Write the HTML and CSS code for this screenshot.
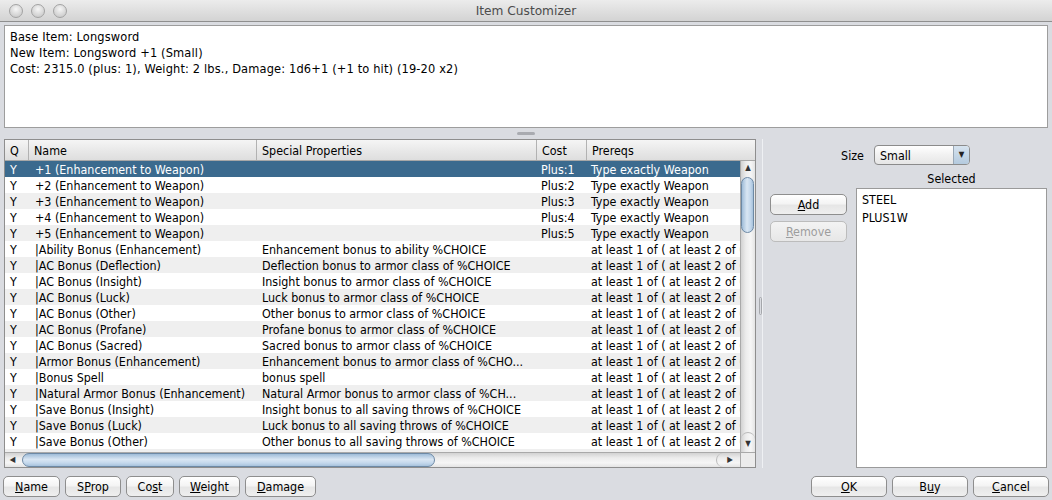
FILE: index.html
```html
<!DOCTYPE html>
<html>
<head>
<meta charset="utf-8">
<link rel="stylesheet" href="styles.css">
</head>
<body>
<div class="window">
  <div class="titlebar">
    <div class="lights"><span class="light"></span><span class="light"></span><span class="light"></span></div>
    <div class="title">Item Customizer</div>
    <div></div>
  </div>
  <div class="info">
    <div>Base Item: Longsword</div>
    <div>New Item: Longsword +1 (Small)</div>
    <div>Cost: 2315.0 (plus: 1), Weight: 2 lbs., Damage: 1d6+1 (+1 to hit) (19-20 x2)</div>
  </div>
  <div class="hsplit"><span class="hgrip"></span></div>
  <div class="main">
    <div class="pane">
      <div class="thead">
        <div class="h h-q">Q</div>
        <div class="h">Name</div>
        <div class="h">Special Properties</div>
        <div class="h">Cost</div>
        <div class="h">Prereqs</div>
      </div>
      <div class="pbody">
        <div class="rows">
          <div class="r sel"><span class="c-q">Y</span><span class="c-n">+1 (Enhancement to Weapon)</span><span class="c-s"></span><span class="c-c">Plus:1</span><span class="c-p">Type exactly Weapon</span></div>
          <div class="r"><span class="c-q">Y</span><span class="c-n">+2 (Enhancement to Weapon)</span><span class="c-s"></span><span class="c-c">Plus:2</span><span class="c-p">Type exactly Weapon</span></div>
          <div class="r alt"><span class="c-q">Y</span><span class="c-n">+3 (Enhancement to Weapon)</span><span class="c-s"></span><span class="c-c">Plus:3</span><span class="c-p">Type exactly Weapon</span></div>
          <div class="r"><span class="c-q">Y</span><span class="c-n">+4 (Enhancement to Weapon)</span><span class="c-s"></span><span class="c-c">Plus:4</span><span class="c-p">Type exactly Weapon</span></div>
          <div class="r alt"><span class="c-q">Y</span><span class="c-n">+5 (Enhancement to Weapon)</span><span class="c-s"></span><span class="c-c">Plus:5</span><span class="c-p">Type exactly Weapon</span></div>
          <div class="r"><span class="c-q">Y</span><span class="c-n">|Ability Bonus (Enhancement)</span><span class="c-s">Enhancement bonus to ability %CHOICE</span><span class="c-c"></span><span class="c-p">at least 1 of ( at least 2 of ( Type exactly Weapon</span></div>
          <div class="r alt"><span class="c-q">Y</span><span class="c-n">|AC Bonus (Deflection)</span><span class="c-s">Deflection bonus to armor class of %CHOICE</span><span class="c-c"></span><span class="c-p">at least 1 of ( at least 2 of ( Type exactly Weapon</span></div>
          <div class="r"><span class="c-q">Y</span><span class="c-n">|AC Bonus (Insight)</span><span class="c-s">Insight bonus to armor class of %CHOICE</span><span class="c-c"></span><span class="c-p">at least 1 of ( at least 2 of ( Type exactly Weapon</span></div>
          <div class="r alt"><span class="c-q">Y</span><span class="c-n">|AC Bonus (Luck)</span><span class="c-s">Luck bonus to armor class of %CHOICE</span><span class="c-c"></span><span class="c-p">at least 1 of ( at least 2 of ( Type exactly Weapon</span></div>
          <div class="r"><span class="c-q">Y</span><span class="c-n">|AC Bonus (Other)</span><span class="c-s">Other bonus to armor class of %CHOICE</span><span class="c-c"></span><span class="c-p">at least 1 of ( at least 2 of ( Type exactly Weapon</span></div>
          <div class="r alt"><span class="c-q">Y</span><span class="c-n">|AC Bonus (Profane)</span><span class="c-s">Profane bonus to armor class of %CHOICE</span><span class="c-c"></span><span class="c-p">at least 1 of ( at least 2 of ( Type exactly Weapon</span></div>
          <div class="r"><span class="c-q">Y</span><span class="c-n">|AC Bonus (Sacred)</span><span class="c-s">Sacred bonus to armor class of %CHOICE</span><span class="c-c"></span><span class="c-p">at least 1 of ( at least 2 of ( Type exactly Weapon</span></div>
          <div class="r alt"><span class="c-q">Y</span><span class="c-n">|Armor Bonus (Enhancement)</span><span class="c-s">Enhancement bonus to armor class of %CHO...</span><span class="c-c"></span><span class="c-p">at least 1 of ( at least 2 of ( Type exactly Weapon</span></div>
          <div class="r"><span class="c-q">Y</span><span class="c-n">|Bonus Spell</span><span class="c-s">bonus spell</span><span class="c-c"></span><span class="c-p">at least 1 of ( at least 2 of ( Type exactly Weapon</span></div>
          <div class="r alt"><span class="c-q">Y</span><span class="c-n">|Natural Armor Bonus (Enhancement)</span><span class="c-s">Natural Armor bonus to armor class of %CH...</span><span class="c-c"></span><span class="c-p">at least 1 of ( at least 2 of ( Type exactly Weapon</span></div>
          <div class="r"><span class="c-q">Y</span><span class="c-n">|Save Bonus (Insight)</span><span class="c-s">Insight bonus to all saving throws of %CHOICE</span><span class="c-c"></span><span class="c-p">at least 1 of ( at least 2 of ( Type exactly Weapon</span></div>
          <div class="r alt"><span class="c-q">Y</span><span class="c-n">|Save Bonus (Luck)</span><span class="c-s">Luck bonus to all saving throws of %CHOICE</span><span class="c-c"></span><span class="c-p">at least 1 of ( at least 2 of ( Type exactly Weapon</span></div>
          <div class="r"><span class="c-q">Y</span><span class="c-n">|Save Bonus (Other)</span><span class="c-s">Other bonus to all saving throws of %CHOICE</span><span class="c-c"></span><span class="c-p">at least 1 of ( at least 2 of ( Type exactly Weapon</span></div>
          <div class="r alt"><span class="c-q">Y</span><span class="c-n">|Save Bonus (Profane)</span><span class="c-s">Profane bonus to all saving throws of %CHOICE</span><span class="c-c"></span><span class="c-p">at least 1 of ( at least 2 of ( Type exactly Weapon</span></div>
        </div>
        <div class="vscroll">
          <div class="varrow-up">&#9650;</div>
          <div class="vtrack"><div class="vthumb"></div></div>
          <div class="varrow-down">&#9660;</div>
        </div>
      </div>
      <div class="hscrollrow">
        <div class="hscroll">
          <div class="harrow-left">&#9664;</div>
          <div class="hthumb"></div>
          <div class="hspace"></div>
          <div class="harrow-right">&#9654;</div>
        </div>
        <div class="corner"></div>
      </div>
    </div>
    <div class="vsplit"><span class="vgrip"></span></div>
    <div class="side">
      <div class="sizerow">
        <span class="lbl">Size</span>
        <div class="combo"><span class="combo-text">Small</span><span class="combo-btn">&#9660;</span></div>
      </div>
      <div class="selrow">
        <div class="selbtns">
          <div class="btn"><u>A</u>dd</div>
          <div class="btn disabled"><u>R</u>emove</div>
        </div>
        <div class="selcol">
          <div class="sellbl">Selected</div>
          <div class="list">
            <div class="li">STEEL</div>
            <div class="li">PLUS1W</div>
          </div>
        </div>
      </div>
    </div>
  </div>
  <div class="bottombar">
    <div class="bgroup">
      <div class="btn b-name"><u>N</u>ame</div>
      <div class="btn b-sprop">S<u>P</u>rop</div>
      <div class="btn b-cost">Co<u>s</u>t</div>
      <div class="btn b-weight"><u>W</u>eight</div>
      <div class="btn b-damage"><u>D</u>amage</div>
    </div>
    <div class="bgroup right">
      <div class="btn b-76"><u>O</u>K</div>
      <div class="btn b-76">B<u>u</u>y</div>
      <div class="btn b-76"><u>C</u>ancel</div>
    </div>
  </div>
</div>
</body>
</html>
```
FILE: styles.css
```css
* { box-sizing: border-box; }
html, body { margin: 0; padding: 0; }
body {
  width: 1052px;
  height: 500px;
  overflow: hidden;
  background: #dadce1;
  font-family: "DejaVu Sans Condensed", "DejaVu Sans", sans-serif;
  font-size: 12.4px;
  color: #000;
}
.window { width: 1052px; height: 500px; display: flex; flex-direction: column; }

/* title bar */
.titlebar {
  height: 22px;
  flex: none;
  display: grid;
  grid-template-columns: 1fr auto 1fr;
  align-items: center;
  background: linear-gradient(#ececec, #d3d3d3);
  border-bottom: 1px solid #8f8f8f;
}
.lights { display: flex; gap: 8px; padding-left: 9px; }
.light {
  width: 14px; height: 14px; border-radius: 50%;
  border: 1px solid #a3a3a3;
  background: radial-gradient(circle at 50% 35%, #f6f6f6, #d6d6d6 60%, #c4c4c4);
}
.title { color: #4c4c4c; font-family: "DejaVu Sans", sans-serif; font-size: 12.2px; }

/* info area */
.info {
  flex: none;
  margin: 3px 4px 0 4px;
  height: 103px;
  background: #fff;
  border: 1px solid #9d9d9d;
  padding: 3px 5px;
  line-height: 16px;
  font-size: 12.7px;
  letter-spacing: 0.15px;
}
.hsplit { flex: none; height: 11px; display: flex; justify-content: center; padding-top: 4px; }
.hgrip { width: 18px; height: 3px; border-radius: 2px; background: #a9abb0; }

/* main */
.main { flex: none; height: 329px; display: flex; padding-left: 4px; }
.pane {
  width: 752px; height: 329px;
  border: 1px solid #8e8e8e;
  background: #fff;
  display: flex; flex-direction: column;
}
.thead {
  height: 21px; flex: none;
  display: grid;
  grid-template-columns: 23px 228px 280px 50px 1fr;
  background: linear-gradient(#f5f5f5, #e9e9e9 50%, #dedede);
  border-bottom: 1px solid #a7a7a7;
  line-height: 21px;
}
.h { border-left: 1px solid #b2b2b2; padding-left: 5px; white-space: nowrap; overflow: hidden; }
.h-q { border-left: none; padding-left: 5px; }

.pbody { height: 291px; flex: none; display: flex; }
.rows { width: 735px; overflow: hidden; }
.r {
  height: 16px; line-height: 17px;
  display: grid;
  grid-template-columns: 23px 228px 280px 50px 154px;
  background: #fff;
  white-space: nowrap;
}
.r.alt { background: #efefef; }
.r.sel { background: #3b6a8e; color: #fff; }
.r span { overflow: hidden; }
.c-q { padding-left: 5px; }
.c-n { padding-left: 7px; }
.c-s { padding-left: 6px; }
.c-c { padding-left: 5px; }
.c-p { padding-left: 5px; }

/* vertical scrollbar */
.vscroll {
  width: 15px; flex: none;
  display: flex; flex-direction: column;
  border-left: 1px solid #a9a9a9;
  background: linear-gradient(to right, #d2d2d2, #ececec 35%, #f6f6f6 70%, #e4e4e4);
}
.varrow-up { height: 14px; font-size: 8px; line-height: 14px; text-align: center; color: #333; }
.vtrack { flex: 1; padding: 2px 1px 0 0; }
.vthumb {
  height: 56px;
  border: 1px solid #6d89a5;
  border-radius: 7px;
  background: linear-gradient(to right, #9fbcd8, #d9e6f3 45%, #c4d8ec 75%, #a7c2dc);
}
.varrow-down {
  height: 20px; font-size: 8px; line-height: 22px; text-align: center; color: #333;
  border-top: 1px solid #b9b9b9;
  border-radius: 7px 7px 0 0;
}

/* horizontal scrollbar */
.hscrollrow { height: 15px; flex: none; display: flex; }
.hscroll {
  width: 735px;
  display: flex; align-items: stretch;
  border-top: 1px solid #a9a9a9;
  background: linear-gradient(#d2d2d2, #ececec 35%, #f6f6f6 70%, #e4e4e4);
}
.harrow-left { width: 15px; font-size: 8px; line-height: 14px; text-align: center; color: #333; }
.hthumb {
  width: 413px; margin: 0 0 0 2px;
  border: 1px solid #6d89a5;
  border-radius: 7px;
  background: linear-gradient(#9fbcd8, #d9e6f3 45%, #c4d8ec 75%, #a7c2dc);
}
.hspace { flex: 1; }
.harrow-right {
  width: 24px; font-size: 8px; line-height: 14px; text-align: center; color: #333;
  padding-left: 3px;
  border-left: 1px solid #b9b9b9;
  border-radius: 7px 0 0 7px;
}
.corner { width: 15px; border-top: 1px solid #a9a9a9; border-left: 1px solid #a9a9a9; background: #ececec; }

/* vertical split */
.vsplit {
  width: 7px; flex: none;
  display: flex; align-items: center; justify-content: center;
  border-right: 1px solid #eef0f3;
  padding-left: 2px;
}
.vgrip { width: 3px; height: 18px; border: 1px solid #a5a7ab; border-radius: 2px; margin-top: 4px; }

/* side panel */
.side { flex: 1; display: flex; flex-direction: column; }
.sizerow { height: 20px; margin-top: 6px; display: flex; justify-content: center; align-items: center; gap: 10px; padding-right: 4px; }
.combo {
  width: 96px; height: 20px;
  border: 1px solid #8b8b8b; border-radius: 4px;
  background: linear-gradient(#ffffff, #f1f1f1 50%, #e6e6e6);
  display: flex; align-items: center; justify-content: space-between;
  overflow: hidden;
}
.combo-text { padding-left: 5px; }
.combo-btn {
  width: 16px; height: 18px; font-size: 8px; line-height: 18px; text-align: center; color: #222;
  border-left: 1px solid #9aa8b6;
  background: linear-gradient(#d6e3ef, #b4cade);
}
.selrow { flex: 1; display: flex; padding-left: 7px; gap: 9px; padding-right: 5px; }
.selbtns { width: 77px; padding-top: 29px; display: flex; flex-direction: column; gap: 6px; }
.selcol { flex: 1; display: flex; flex-direction: column; }
.sellbl { height: 23px; padding-top: 6px; line-height: 16px; text-align: center; }
.list { flex: 1; background: #fff; border: 1px solid #9a9a9a; padding: 2px 5px; }
.li { line-height: 18px; }

/* buttons */
.btn {
  height: 21px;
  border: 1px solid #8e8e8e;
  border-radius: 5px;
  background: linear-gradient(#ffffff, #f4f4f4 45%, #e6e6e6 55%, #efefef);
  text-align: center;
  line-height: 20px;
  white-space: nowrap;
}
.btn.disabled { color: #9d9d9d; border-color: #bcbcbc; background: linear-gradient(#f3f3f3, #e7e7e7); }
.bottombar { flex: 1; display: flex; justify-content: space-between; padding: 8px 3px 0 3px; }
.bgroup { display: flex; gap: 5px; }
.bgroup.right { gap: 5px; }
.b-name { width: 57px; }
.b-sprop { width: 56px; }
.b-cost { width: 48px; }
.b-weight { width: 61px; }
.b-damage { width: 71px; }
.b-76 { width: 76px; }
```
